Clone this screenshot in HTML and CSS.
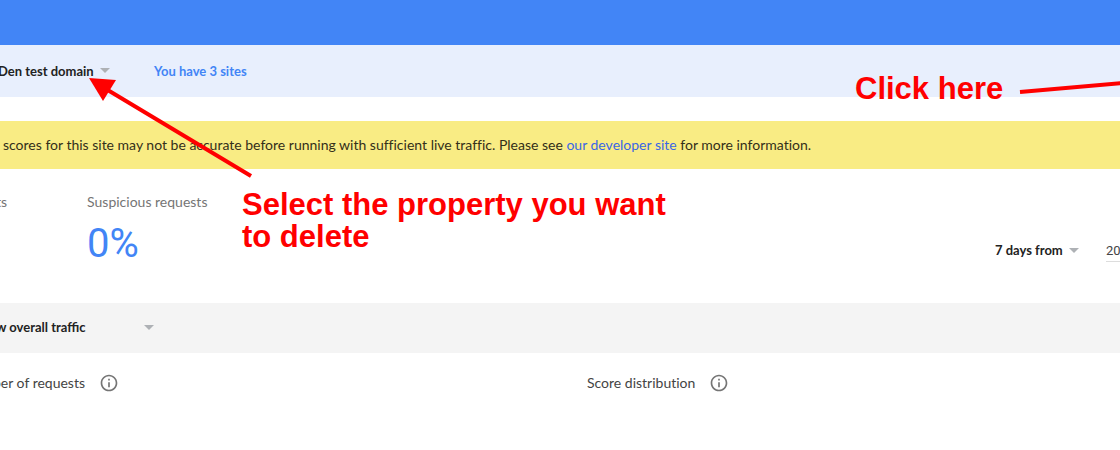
FILE: index.html
```html
<!DOCTYPE html>
<html lang="en">
<head>
<meta charset="utf-8">
<title>Site traffic</title>
<link rel="stylesheet" href="styles.css">
</head>
<body>
<div class="page">
  <header class="topbar"></header>
  <nav class="property-bar">
    <label class="dropdown property">
      <select aria-label="Property"><option>Den test domain</option></select>
    </label>
    <a class="site-count" href="#">You have 3 sites</a>
  </nav>
  <main>
    <p class="notice">e scores for this site may not be accurate before running with sufficient live traffic. Please see <a href="#">our developer site</a> for more information.</p>
    <section class="summary">
      <div class="stat stat-cut"><h2>ts</h2></div>
      <div class="stat"><h2>Suspicious requests</h2><p class="value">0%</p></div>
      <div class="range">
        <label class="dropdown">
          <select aria-label="Date range"><option>7 days from</option></select>
        </label>
        <input class="date" type="text" aria-label="Date" value="20">
      </div>
    </section>
    <div class="filter-bar">
      <label class="dropdown traffic">
        <select aria-label="Traffic"><option>w overall traffic</option></select>
      </label>
    </div>
    <section class="charts">
      <div class="chart-title chart-cut">
        <h3>ber of requests</h3>
        <button class="info" type="button" aria-label="About requests">
          <svg viewBox="0 0 24 24"><path d="M11 7h2v2h-2zm0 4h2v6h-2zm1-9C6.48 2 2 6.48 2 12s4.48 10 10 10 10-4.480 10-10S17.520 2 12 2zm0 18c-4.410 0-8-3.590-8-8s3.590-8 8-8 8 3.590 8 8-3.590 8-8 8z"/></svg>
        </button>
      </div>
      <div class="chart-title">
        <h3>Score distribution</h3>
        <button class="info" type="button" aria-label="About score distribution">
          <svg viewBox="0 0 24 24"><path d="M11 7h2v2h-2zm0 4h2v6h-2zm1-9C6.48 2 2 6.48 2 12s4.48 10 10 10 10-4.480 10-10S17.520 2 12 2zm0 18c-4.410 0-8-3.590-8-8s3.590-8 8-8 8 3.590 8 8-3.590 8-8 8z"/></svg>
        </button>
      </div>
    </section>
  </main>
  <svg class="arrows" width="1120" height="200" viewBox="0 0 1120 200" aria-hidden="true">
    <path d="M251 176 106 89M1020 92l102-9" fill="none" stroke="#f00" stroke-width="4"/>
    <path d="M89 78l27 2-13 21z" fill="#f00"/>
  </svg>
  <p class="note note-select">Select the property you want<br>to delete</p>
  <p class="note note-click">Click here</p>
</div>
</body>
</html>
```
FILE: styles.css
```css
* { box-sizing: border-box; }

body {
  margin: 0;
  background: #fff;
  color: #333;
  font: 14px/20px Lato, "Noto Sans", sans-serif;
  font-variant-ligatures: none;
}

h2, h3, p { margin: 0; font-size: 14px; font-weight: 400; }
a { text-decoration: none; }

.page { position: relative; min-height: 100vh; overflow: hidden; }

.topbar { height: 45px; background: #4285f6; }

.property-bar {
  display: flex;
  align-items: center;
  gap: 44px;
  height: 52px;
  padding-bottom: 1px;
  background: #e8effd;
}
.property { margin-left: -2px; }

.dropdown { display: inline-flex; align-items: center; gap: 6px; }
.dropdown::after {
  content: "";
  border: 5px solid transparent;
  border-top-color: #aeb1b5;
  border-bottom: 0;
}
.dropdown select {
  appearance: none;
  border: 0;
  padding: 0;
  background: none;
  color: #222;
  font: 700 13px/20px Lato, "Noto Sans", sans-serif;
}

.site-count { color: #4285f6; font-size: 13px; font-weight: 700; }

.notice {
  margin-top: 24px;
  padding: 14px 0;
  background: #f9ec84;
  color: #332f1a;
  text-indent: -8px;
  white-space: nowrap;
}
.notice a { color: #3967e5; }

.summary { display: flex; gap: 80px; height: 134px; padding-top: 23px; }
.summary h2 { color: #757575; }
.stat-cut { margin-left: -4px; }
.value { margin-top: 12px; color: #4285f6; font: 400 40px/40px Roboto, sans-serif; }

.range {
  display: flex;
  align-items: center;
  gap: 27px;
  height: 24px;
  margin: 46px 0 0 auto;
}
.date {
  width: 14px;
  height: 24px;
  border: 0;
  border-bottom: 1px solid #ddd;
  padding: 2px 0 0;
  color: #444;
  font: 13px/20px Roboto, "Noto Sans", sans-serif;
}

.filter-bar {
  display: flex;
  align-items: center;
  height: 50px;
  padding-bottom: 2px;
  background: #f4f4f4;
}
.traffic { gap: 58px; margin-left: -4px; }

.charts { display: grid; grid-template-columns: 587px 1fr; padding-top: 20px; }
.chart-title { display: flex; align-items: center; gap: 14px; }
.chart-title h3 { color: #444; }
.chart-cut { margin-left: -7px; }

.info { width: 20px; height: 20px; border: 0; padding: 0; background: none; }
.info svg { display: block; width: 20px; height: 20px; fill: #757575; }

.arrows { position: absolute; top: 0; left: 0; }
.note {
  position: absolute;
  color: #f00;
  font: 700 31px/32px "Liberation Sans", Arial, sans-serif;
  white-space: nowrap;
}
.note-select { top: 189px; left: 242px; }
.note-click { top: 73px; left: 855px; }
```
